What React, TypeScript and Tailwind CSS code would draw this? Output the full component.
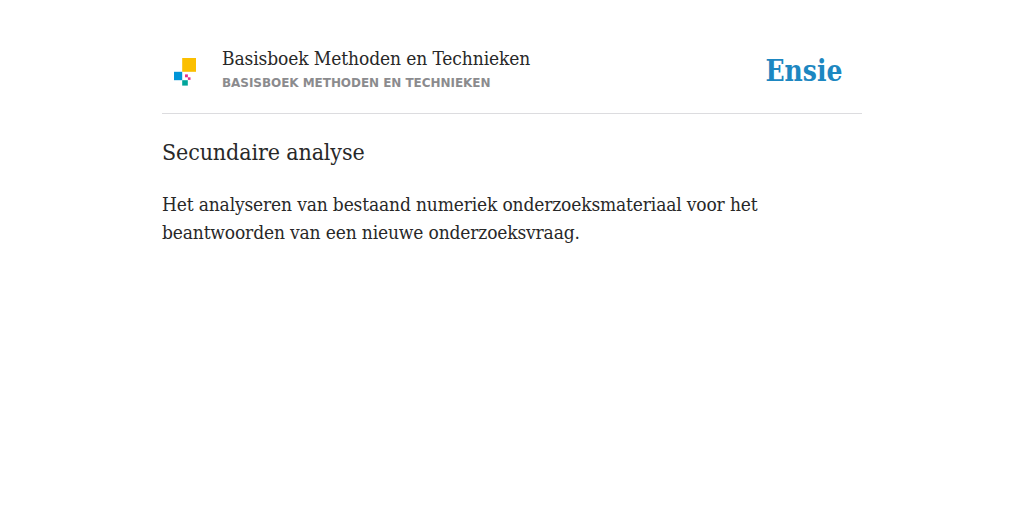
function SourceLogo() {
  return (
    <svg width="22" height="28" viewBox="0 0 22 28" className="ml-3 mt-2">
      <rect x="8.2" y="0" width="13.8" height="13.8" fill="#fbbf00" />
      <rect x="0" y="13.8" width="8.2" height="8.4" fill="#0095d8" />
      <rect x="11" y="16.4" width="2.9" height="2.9" fill="#e6308a" />
      <rect x="13.9" y="19.3" width="2.6" height="2.6" fill="#e6308a" />
      <rect x="8.2" y="22.2" width="5.6" height="5.4" fill="#00a59b" />
    </svg>
  );
}

function EnsieLogo() {
  return (
    <svg width="88" height="44" viewBox="0 0 88 44" className="ml-auto mr-3">
      <text
        x="3.5"
        y="30.5"
        textLength="77"
        lengthAdjust="spacingAndGlyphs"
        fill="#1d87c1"
        className="font-['DejaVu_Serif_Condensed','DejaVu_Serif',serif] text-[29px] font-bold"
      >
        Ensie
      </text>
    </svg>
  );
}

function App() {
  return (
    <main className="mx-auto w-[700px] font-['DejaVu_Serif_Condensed','DejaVu_Serif',serif] text-[#282828]">
      <header className="flex h-16 mt-[50px] items-start border-b border-[#dcdcdf]">
        <SourceLogo />
        <div className="ml-[26px] -mt-1.5">
          <p className="text-[19px] leading-7 tracking-[-0.1px]">
            Basisboek Methoden en Technieken
          </p>
          <p className="mt-0.5 font-['DejaVu_Sans',sans-serif] text-xs leading-[18px] font-bold tracking-[-0.05px] text-[#8b8b8e] uppercase">
            Basisboek Methoden en Technieken
          </p>
        </div>
        <EnsieLogo />
      </header>
      <h1 className="mt-[22px] text-[23px] leading-8 tracking-[-0.12px]">
        Secundaire analyse
      </h1>
      <p className="mt-[22px] text-[19px] leading-7 tracking-[-0.15px]">
        Het analyseren van bestaand numeriek onderzoeksmateriaal voor het
        <br />
        beantwoorden van een nieuwe onderzoeksvraag.
      </p>
    </main>
  );
}

export default App;
